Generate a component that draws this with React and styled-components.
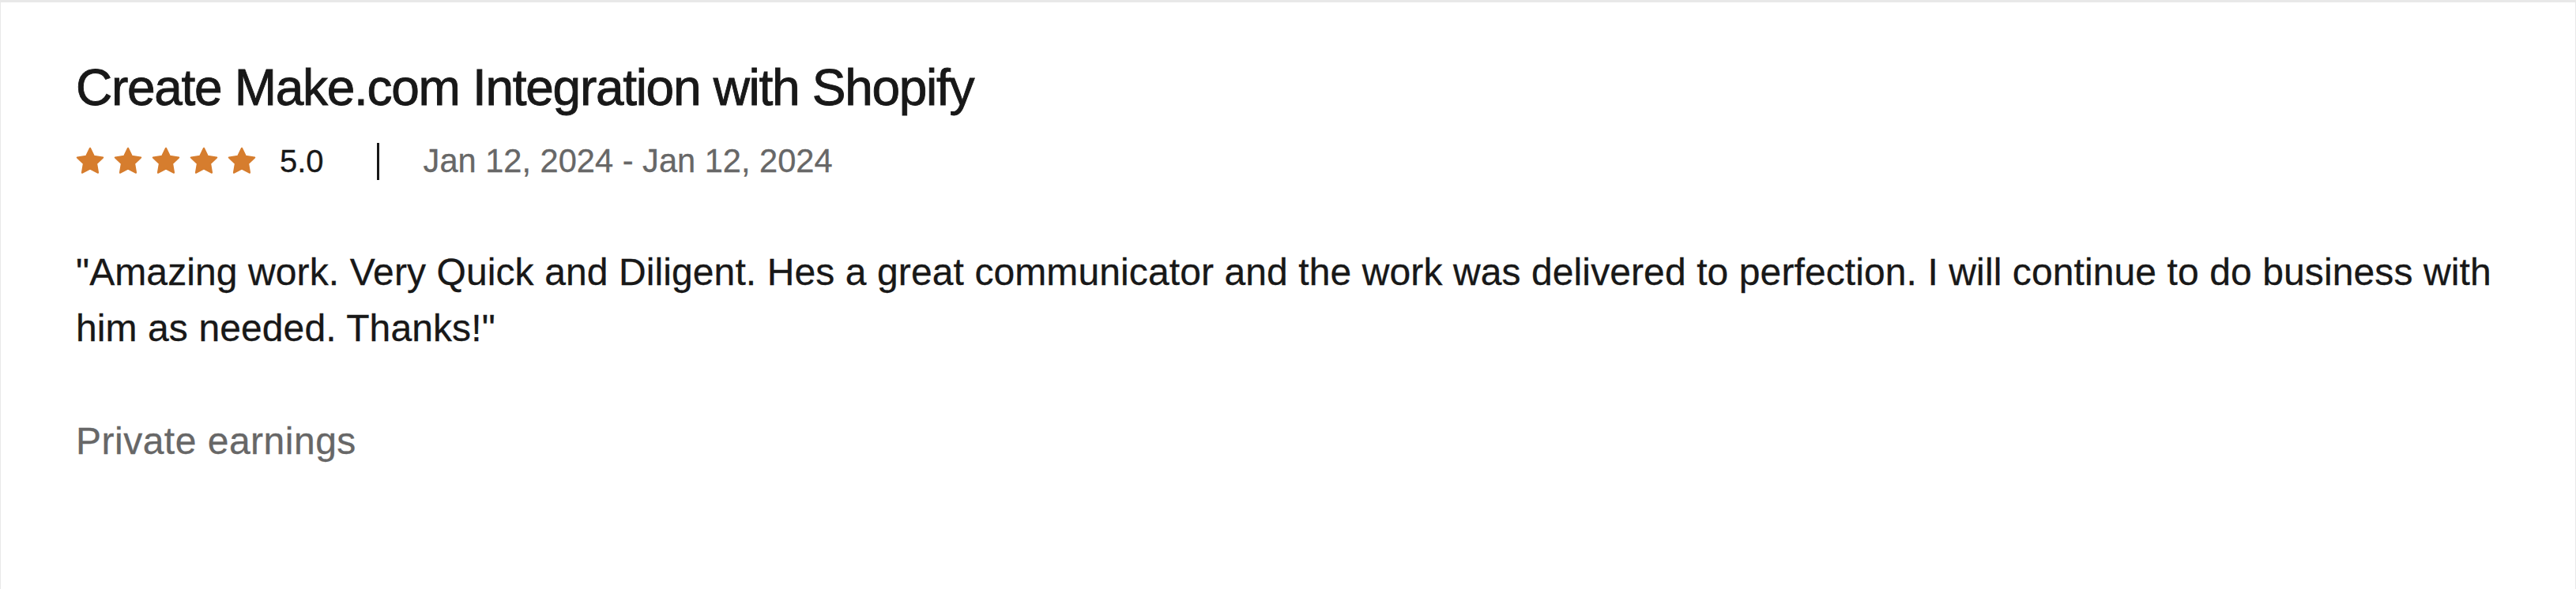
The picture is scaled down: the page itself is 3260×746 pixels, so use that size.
import React from "react";
import styled, { createGlobalStyle } from "styled-components";

const GlobalStyle = createGlobalStyle`
  html, body {
    margin: 0;
    padding: 0;
    background: #ffffff;
  }
  body {
    font-family: "Liberation Sans", Arial, Helvetica, sans-serif;
    color: #181818;
    -webkit-font-smoothing: antialiased;
  }
  * { box-sizing: border-box; }
`;

const Card = styled.section`
  display: flex;
  flex-direction: column;
  min-height: 746px;
  background: #ffffff;
  border-top: 3px solid #e8e8e8;
  border-left: 1px solid #e8e8e8;
  border-right: 1px solid #e8e8e8;
  padding: 68px 95px 0 95px;
`;

const Title = styled.h2`
  margin: 0;
  font-size: 64px;
  line-height: 80px;
  font-weight: 400;
  letter-spacing: -1.3px;
  color: #181818;
  -webkit-text-stroke: 0.9px #181818;
`;

const MetaRow = styled.div`
  display: flex;
  align-items: center;
  height: 48px;
  margin-top: 29px;
`;

const Stars = styled.div`
  display: flex;
  align-items: center;
  gap: 12px;
`;

const StarSvg = styled.svg`
  display: block;
  width: 36px;
  height: 36px;
`;

const Rating = styled.span`
  margin-left: 30px;
  font-size: 40px;
  line-height: 48px;
  color: #181818;
  -webkit-text-stroke: 0.3px #181818;
`;

const Divider = styled.span`
  display: block;
  width: 3px;
  height: 47px;
  background: #181818;
  margin: 0 56px 0 67px;
`;

const DateRange = styled.span`
  font-size: 41.6px;
  line-height: 48px;
  color: #676767;
  -webkit-text-stroke: 0.3px #676767;
`;

const Body = styled.p`
  margin: 81px 0 0 0;
  font-size: 48px;
  line-height: 71px;
  letter-spacing: 0.1px;
  color: #181818;
  -webkit-text-stroke: 0.3px #181818;
`;

const Earnings = styled.p`
  margin: 72px 0 0 0;
  font-size: 48px;
  line-height: 72px;
  letter-spacing: 0.5px;
  color: #676767;
  -webkit-text-stroke: 0.3px #676767;
`;

const Star = () => (
  <StarSvg viewBox="0 0 24 24" aria-hidden="true">
    <polygon
      points="12 1.2 15.3 7.9 22.8 9 17.4 14.2 18.7 21.8 12 18.3 5.3 21.8 6.6 14.2 1.2 9 8.7 7.9"
      fill="#d67d2e"
      stroke="#d67d2e"
      strokeWidth="1.4"
      strokeLinejoin="round"
    />
  </StarSvg>
);

export default function App() {
  return (
    <>
      <GlobalStyle />
      <Card>
        <Title>Create Make.com Integration with Shopify</Title>
        <MetaRow>
          <Stars>
            {[0, 1, 2, 3, 4].map((i) => (
              <Star key={i} />
            ))}
          </Stars>
          <Rating>5.0</Rating>
          <Divider />
          <DateRange>Jan 12, 2024 - Jan 12, 2024</DateRange>
        </MetaRow>
        <Body>
          "Amazing work. Very Quick and Diligent. Hes a great communicator and the work was
          delivered to perfection. I will continue to do business with him as needed. Thanks!"
        </Body>
        <Earnings>Private earnings</Earnings>
      </Card>
    </>
  );
}
